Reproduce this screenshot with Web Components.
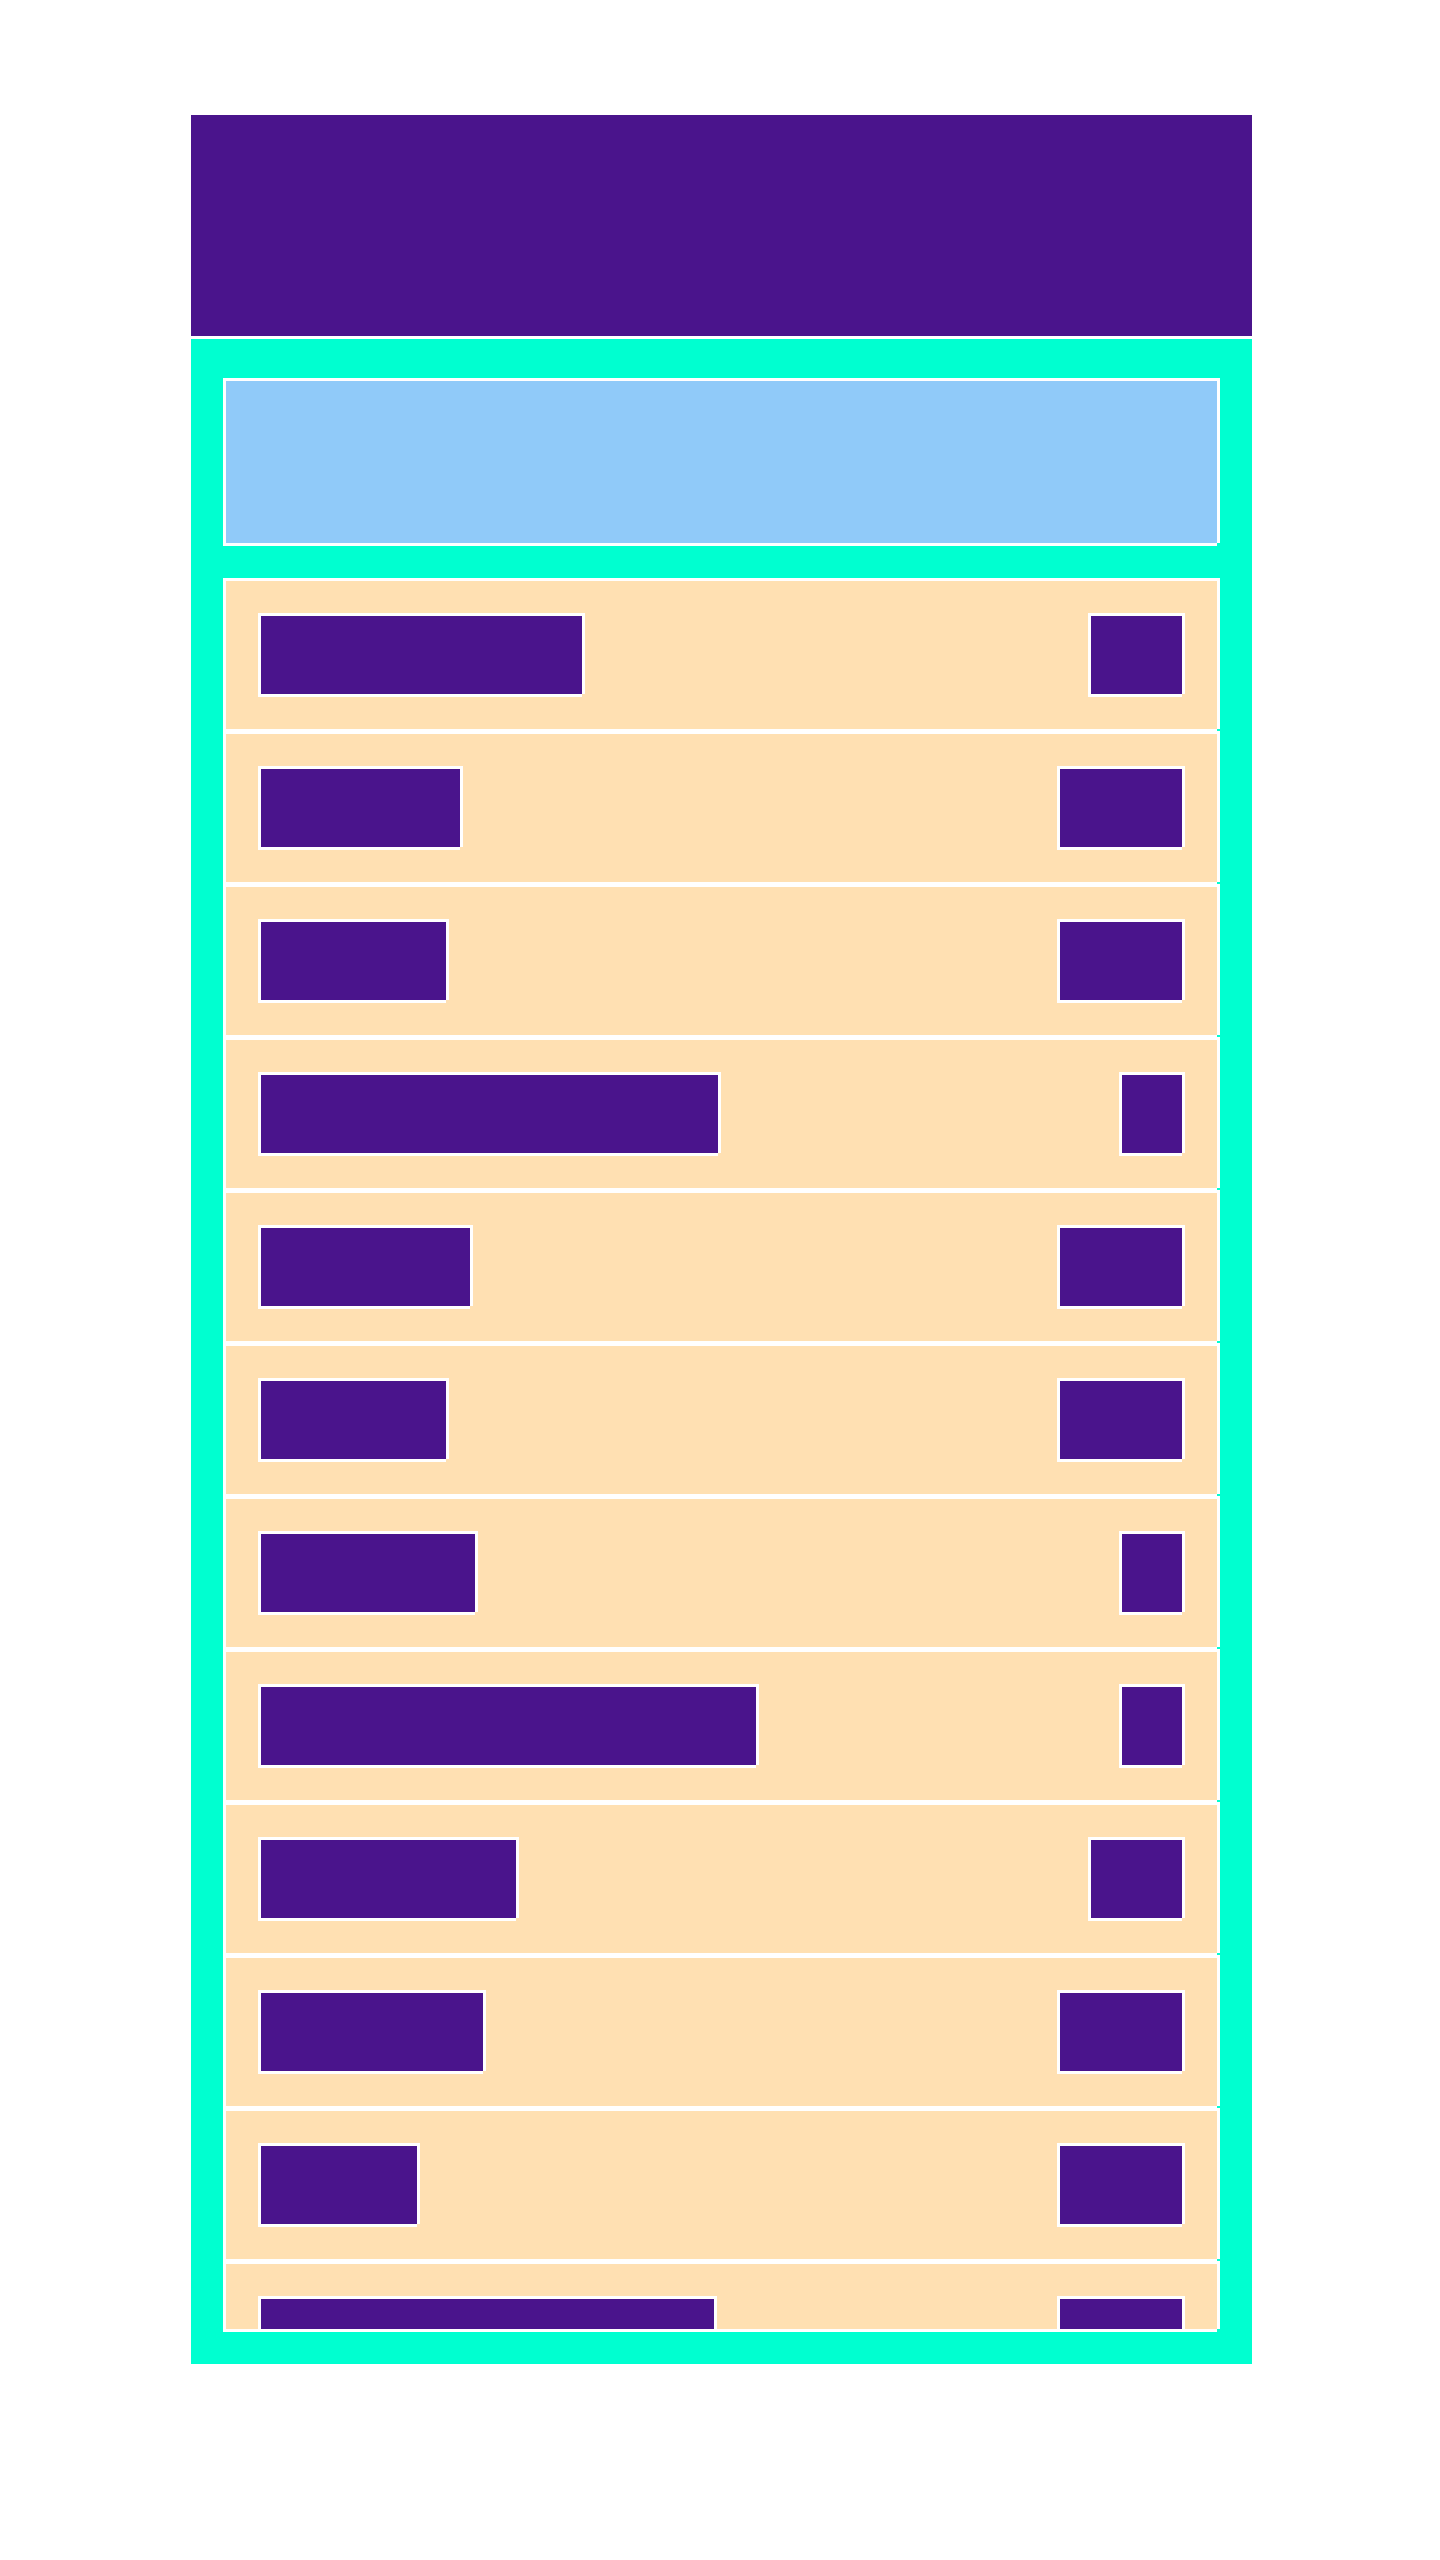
<!DOCTYPE html>
<html lang="en">
<head>
<meta charset="utf-8">
<title>Block list</title>
<style>
  html, body { margin: 0; height: 100%; background: #fff; }
</style>
</head>
<body>
<block-page>
  <block-banner slot="header"></block-banner>
  <block-panel>
    <block-summary></block-summary>
    <block-list></block-list>
  </block-panel>
</block-page>
<script>
  // White edge on every side, open at the bottom-right corner.
  const edge = 'box-shadow: -3px -3px #fff, 3px -3px #fff, -3px 3px #fff, 3px 0 #fff, 0 3px #fff;';

  function define(name, css, html) {
    customElements.define(name, class extends HTMLElement {
      constructor() {
        super();
        this.attachShadow({ mode: 'open' }).innerHTML = `<style>${css}</style>${html}`;
      }
    });
  }

  define('block-page',
    `:host { display: flex; flex-direction: column; gap: 3px; box-sizing: border-box;
             height: 100%; padding: 115px 188px 196px 191px; }
     main { display: flex; flex: 1; min-height: 0; }`,
    `<slot name="header"></slot><main><slot></slot></main>`);

  define('block-banner',
    `:host { display: block; height: 221px; background: #4a148c; }`, ``);

  define('block-panel',
    `:host { display: flex; flex: 1; flex-direction: column; gap: 35px; min-height: 0;
             box-sizing: border-box; padding: 42px 35px 35px; background: #00ffd0; }`,
    `<slot></slot>`);

  define('block-summary',
    `:host { display: block; flex: none; height: 162px; background: #90caf9; ${edge} }`, ``);

  define('block-chip',
    `:host { display: block; height: 78px; background: #4a148c; ${edge} }`, ``);

  define('block-row',
    `:host { display: flex; flex: none; justify-content: space-between; padding: 35px;
             background: #ffe0b2; ${edge} }`,
    `<slot></slot>`);

  // [leading width, trailing width] of each row
  const rows = [
    [321, 91], [199, 122], [185, 122], [457, 60], [209, 122], [185, 122],
    [214, 60], [495, 60], [255, 91], [222, 122], [156, 122], [453, 122]
  ];

  // Rows are cut off vertically while their side edges stay visible;
  // the top padding leaves room for the first row's edge.
  define('block-list',
    `:host { display: flex; flex: 1; flex-direction: column; gap: 5px; min-height: 0;
             box-sizing: border-box; padding-top: 3px; overflow-x: visible; overflow-y: clip;
             box-shadow: -3px 3px #fff, 0 3px #fff; }`,
    rows.map(([a, b]) =>
      `<block-row><block-chip style="width:${a}px"></block-chip><block-chip style="width:${b}px"></block-chip></block-row>`
    ).join(''));
</script>
</body>
</html>
